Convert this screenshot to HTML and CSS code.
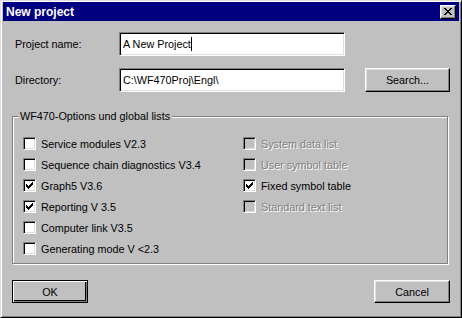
FILE: index.html
```
<!DOCTYPE html>
<html lang="en">
<head>
    <meta charset="UTF-8">
    <title>New project</title>
    <link rel="stylesheet" href="styles.css">
</head>
<body>
    <div class="dialog">
        <div class="titlebar">
            <span class="title">New project</span>
            <button class="close-btn" title="Close">
                <svg width="8" height="7" viewBox="0 0 8 7" shape-rendering="crispEdges">
                    <path d="M0 0h2v1h-2z M6 0h2v1h-2z M1 1h2v1h-2z M5 1h2v1h-2z M2 2h4v1h-4z M3 3h2v1h-2z M2 4h4v1h-4z M1 5h2v1h-2z M5 5h2v1h-2z M0 6h2v1h-2z M6 6h2v1h-2z" fill="#000"/>
                </svg>
            </button>
        </div>

        <div class="content">
            <!-- Поля ввода -->
            <div class="field-row">
                <label class="field-label">Project name:</label>
                <div class="edit">A New Project<span class="caret"></span></div>
            </div>
            <div class="field-row second">
                <label class="field-label">Directory:</label>
                <div class="edit">C:\WF470Proj\Engl\</div>
                <button class="btn search-btn">Search...</button>
            </div>

            <!-- Опции -->
            <div class="group">
                <span class="group-title">WF470-Options und global lists</span>
                <div class="options">
                    <div class="check"><span class="box"></span>Service modules V2.3</div>
                    <div class="check disabled"><span class="box"></span>System data list</div>
                    <div class="check"><span class="box"></span>Sequence chain diagnostics V3.4</div>
                    <div class="check disabled"><span class="box"></span>User symbol table</div>
                    <div class="check checked"><span class="box"><svg width="7" height="7" viewBox="0 0 7 7" shape-rendering="crispEdges"><path d="M6 0h1v1h-1z M5 1h2v1h-2z M0 2h1v1h-1z M4 2h3v1h-3z M0 3h2v1h-2z M3 3h3v1h-3z M0 4h5v1h-5z M1 5h3v1h-3z M2 6h1v1h-1z" fill="#000"/></svg></span>Graph5 V3.6</div>
                    <div class="check checked"><span class="box"><svg width="7" height="7" viewBox="0 0 7 7" shape-rendering="crispEdges"><path d="M6 0h1v1h-1z M5 1h2v1h-2z M0 2h1v1h-1z M4 2h3v1h-3z M0 3h2v1h-2z M3 3h3v1h-3z M0 4h5v1h-5z M1 5h3v1h-3z M2 6h1v1h-1z" fill="#000"/></svg></span>Fixed symbol table</div>
                    <div class="check checked"><span class="box"><svg width="7" height="7" viewBox="0 0 7 7" shape-rendering="crispEdges"><path d="M6 0h1v1h-1z M5 1h2v1h-2z M0 2h1v1h-1z M4 2h3v1h-3z M0 3h2v1h-2z M3 3h3v1h-3z M0 4h5v1h-5z M1 5h3v1h-3z M2 6h1v1h-1z" fill="#000"/></svg></span>Reporting V 3.5</div>
                    <div class="check disabled"><span class="box"></span>Standard text list</div>
                    <div class="check"><span class="box"></span>Computer link V3.5</div>
                    <div></div>
                    <div class="check"><span class="box"></span>Generating mode V &lt;2.3</div>
                </div>
            </div>

            <div class="buttons">
                <button class="btn default">OK</button>
                <button class="btn">Cancel</button>
            </div>
        </div>
    </div>
</body>
</html>
```
FILE: styles.css
```
body {
    margin: 0;
    background-color: #c0c0c0;
    font-family: 'Liberation Sans', Arial, sans-serif;
    font-size: 10.8px;
    color: #000;
}
.dialog {
    width: 462px;
    height: 318px;
    box-sizing: border-box;
    background-color: #c0c0c0;
    border: 1px solid;
    border-color: #dfdfdf #000 #000 #dfdfdf;
    box-shadow: inset 1px 1px #fff, inset -1px -1px #808080;
    padding: 1px 2px 2px 2px;
}
.titlebar {
    height: 19px;
    background-color: #000080;
    display: flex;
    align-items: center;
    justify-content: space-between;
    padding: 0 3px 0 3px;
}
.title {
    color: #fff;
    font-weight: bold;
    font-size: 12px;
}
.close-btn {
    width: 16px;
    height: 14px;
    padding: 0;
    margin: 0;
    background-color: #c0c0c0;
    border: 1px solid;
    border-color: #fff #000 #000 #fff;
    box-shadow: inset -1px -1px #808080, inset 1px 1px #dfdfdf;
    display: flex;
    align-items: center;
    justify-content: center;
}
.content {
    padding: 11px 9px 0 9px;
}
.field-row {
    display: flex;
    align-items: center;
    height: 24px;
}
.field-row.second {
    margin-top: 12px;
}
.field-label {
    width: 107px;
    padding-left: 3px;
    box-sizing: border-box;
}
.edit {
    width: 226px;
    height: 24px;
    box-sizing: border-box;
    background-color: #fff;
    border: 1px solid;
    border-color: #808080 #fff #fff #808080;
    box-shadow: inset 1px 1px #000, inset -1px -1px #dfdfdf;
    padding: 0 3px;
    line-height: 22px;
    white-space: nowrap;
}
.caret {
    display: inline-block;
    width: 1px;
    height: 14px;
    background-color: #000;
    vertical-align: -3px;
}
.btn {
    font-family: inherit;
    font-size: 10.8px;
    color: #000;
    background-color: #c0c0c0;
    border: 1px solid;
    border-color: #fff #000 #000 #fff;
    box-shadow: inset -1px -1px #808080, inset 1px 1px #dfdfdf;
    width: 76px;
    height: 23px;
    padding: 0;
}
.search-btn {
    width: 85px;
    height: 24px;
    margin-left: 20px;
}
.btn.default {
    border-color: #000;
    box-shadow: inset 1px 1px #fff, inset -1px -1px #808080, inset -2px -2px #000;
}
.group {
    position: relative;
    margin-top: 24px;
    margin-right: 2px;
    height: 148px;
    box-sizing: border-box;
    border: 1px solid #808080;
    box-shadow: inset 1px 1px #fff, 1px 1px #fff;
}
.group-title {
    position: absolute;
    top: -8px;
    left: 5px;
    line-height: 14px;
    padding: 0 2px;
    background-color: #c0c0c0;
}
.options {
    display: grid;
    grid-template-columns: 220px 1fr;
    grid-auto-rows: 21px;
    padding: 16px 0 0 10px;
}
.check {
    display: flex;
    align-items: center;
    white-space: nowrap;
}
.box {
    width: 13px;
    height: 13px;
    box-sizing: border-box;
    margin-right: 5px;
    background-color: #fff;
    border: 1px solid;
    border-color: #808080 #fff #fff #808080;
    box-shadow: inset 1px 1px #000, inset -1px -1px #dfdfdf;
    display: flex;
    align-items: center;
    justify-content: center;
}
.box svg {
    display: block;
}
.check.disabled {
    color: #808080;
    text-shadow: 1px 1px 0 #fff;
}
.check.disabled .box {
    background-color: #c0c0c0;
}
.buttons {
    display: flex;
    justify-content: space-between;
    margin-top: 16px;
}
```
